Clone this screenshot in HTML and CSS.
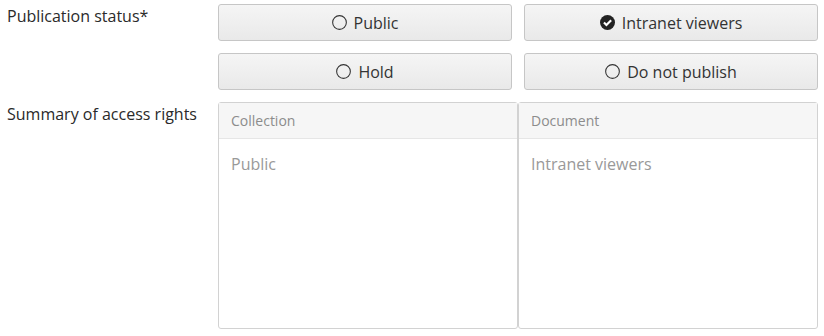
FILE: index.html
```html
<!DOCTYPE html>
<html lang="en">

<head>
    <title>Access rights</title>
    <meta charset="UTF-8">
    <meta name="viewport" content="width=device-width, initial-scale=1.0">
    <link rel="stylesheet" href="styles.css">
</head>

<body>
    <div class="form-row">
        <div class="form-label">Publication status*</div>
        <div class="status-options">
            <button type="button" class="status-btn">
                <svg class="radio-icon" viewBox="0 0 14 14"><circle cx="7" cy="7" r="6.4" fill="none" stroke="#333" stroke-width="1"/></svg>
                Public
            </button>
            <button type="button" class="status-btn">
                <svg class="radio-icon" viewBox="0 0 14 14"><circle cx="7" cy="7" r="7" fill="#222"/><path d="M3.7 7.1 L6 9.4 L10.4 4.9" fill="none" stroke="#fff" stroke-width="2"/></svg>
                Intranet viewers
            </button>
            <button type="button" class="status-btn">
                <svg class="radio-icon" viewBox="0 0 14 14"><circle cx="7" cy="7" r="6.4" fill="none" stroke="#333" stroke-width="1"/></svg>
                Hold
            </button>
            <button type="button" class="status-btn">
                <svg class="radio-icon" viewBox="0 0 14 14"><circle cx="7" cy="7" r="6.4" fill="none" stroke="#333" stroke-width="1"/></svg>
                Do not publish
            </button>
        </div>
    </div>

    <div class="form-row summary-row">
        <div class="form-label">Summary of access rights</div>
        <div class="summary">
            <div class="summary-panel">
                <div class="panel-head">Collection</div>
                <div class="panel-body">Public</div>
            </div>
            <div class="summary-panel">
                <div class="panel-head">Document</div>
                <div class="panel-body">Intranet viewers</div>
            </div>
        </div>
    </div>
</body>

</html>
```

FILE: styles.css
```css
body {
    font-family: "Open Sans", sans-serif;
    margin: 0;
    background: #fff;
    color: #333;
}

.form-row {
    display: grid;
    grid-template-columns: 218px 600px;
}

.form-label {
    font-size: 16px;
    line-height: 22px;
    padding-left: 7px;
    color: #2a2a2a;
}

.status-options {
    display: grid;
    grid-template-columns: 294px 294px;
    gap: 12px;
    padding-top: 4px;
}

.form-row:first-child .form-label {
    padding-top: 5px;
}

.status-btn {
    height: 37px;
    display: flex;
    align-items: center;
    justify-content: center;
    gap: 7px;
    font-family: "Open Sans", sans-serif;
    font-size: 16px;
    color: #333;
    background: linear-gradient(#f5f5f5, #e9e9e9);
    border: 1px solid #c6c6c6;
    border-radius: 3px;
    padding: 0;
    cursor: pointer;
}

.radio-icon {
    width: 15px;
    height: 15px;
}

.summary-row {
    margin-top: 12px;
}

.summary-row .form-label {
    padding-top: 1px;
}

.summary {
    display: grid;
    grid-template-columns: 300px 300px;
}

.summary-panel {
    height: 227px;
    border: 1px solid #d2d2d2;
    border-radius: 3px;
    box-sizing: border-box;
}

.panel-head {
    height: 36px;
    box-sizing: border-box;
    border-bottom: 1px solid #e6e6e6;
    background: #f6f6f6;
    font-size: 14px;
    color: #8c8c8c;
    padding: 8px 12px 0;
}

.panel-body {
    font-size: 16px;
    color: #999;
    padding: 14px 12px;
}
```
